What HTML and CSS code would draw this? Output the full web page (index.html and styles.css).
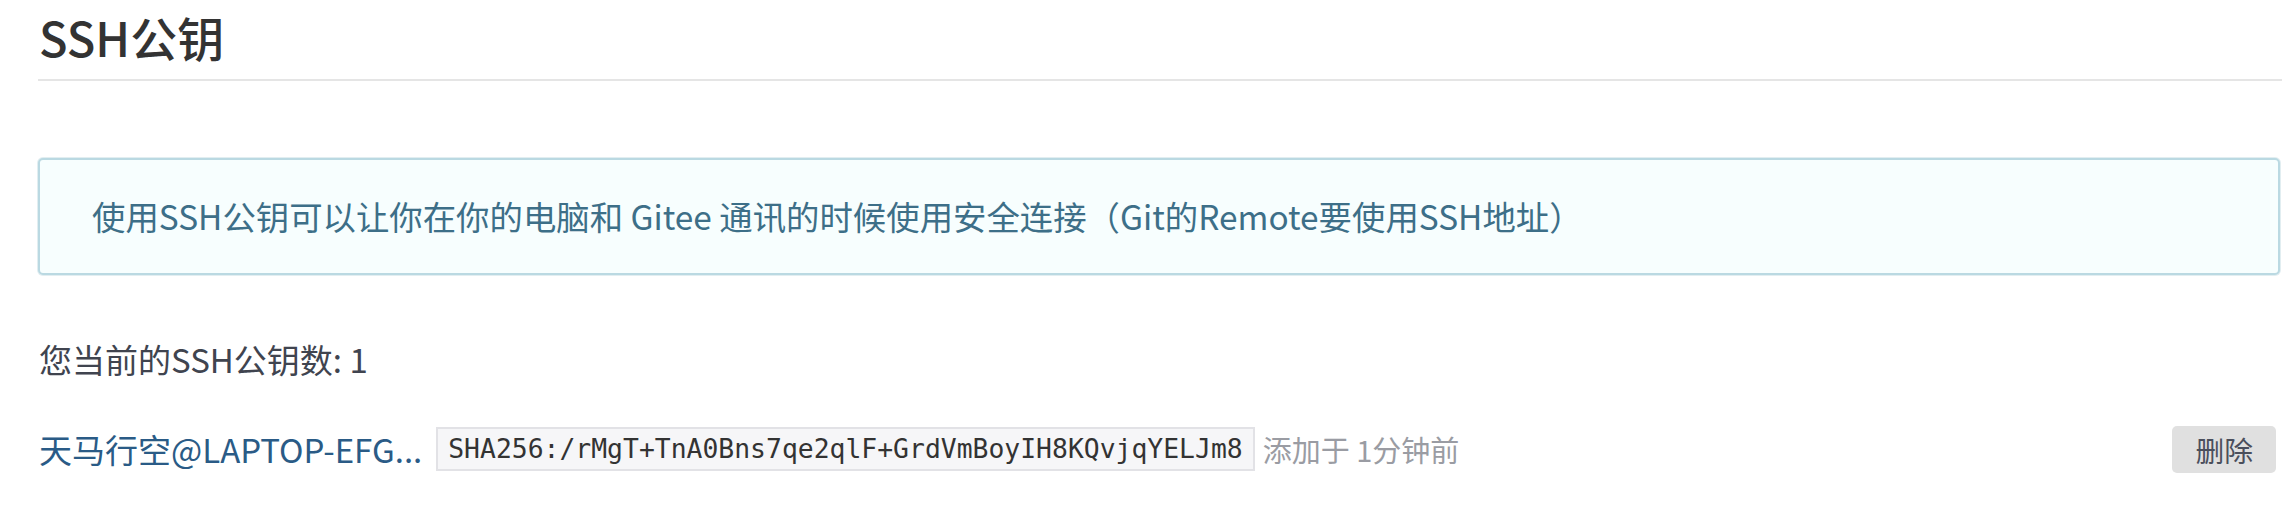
FILE: index.html
```html
<!DOCTYPE html>
<html lang="zh-CN">
<head>
<meta charset="utf-8">
<title>SSH公钥</title>
<link rel="stylesheet" href="styles.css">
</head>
<body>
<div class="page">
  <h3 class="title">SSH公钥</h3>
  <div class="alert">使用SSH公钥可以让你在你的电脑和 Gitee 通讯的时候使用安全连接（Git的Remote要使用SSH地址）</div>
  <div class="count">您当前的SSH公钥数: 1</div>
  <div class="key-row">
    <a class="key-name" href="#">天马行空@LAPTOP-EFG...</a>
    <code class="fingerprint">SHA256:/rMgT+TnA0Bns7qe2qlF+GrdVmBoyIH8KQvjqYELJm8</code>
    <span class="added">添加于 1分钟前</span>
    <button class="btn-delete" type="button">删除</button>
  </div>
</div>
</body>
</html>
```
FILE: styles.css
```css
html, body {
  margin: 0;
  padding: 0;
  background: #ffffff;
}

body {
  font-family: "Noto Sans CJK SC", "Noto Sans", sans-serif;
  color: #40444f;
}

.page {
  padding: 0 5px 0 38px;
}

.title {
  margin: 0;
  padding: 9px 0 14px 1px;
  font-size: 47px;
  line-height: 56px;
  font-weight: 500;
  color: #333333;
  border-bottom: 2px solid #e5e5e5;
}

.alert {
  margin-top: 77px;
  margin-right: 2px;
  padding: 32px 40px 33px 52px;
  background: #f7fefe;
  border: 2px solid #bad9e2;
  border-radius: 5px;
  box-shadow: 0 0 0 1px #e2eef1;
  font-size: 33.4px;
  line-height: 48px;
  color: #3d6f88;
}

.count {
  margin-top: 60px;
  padding-left: 1px;
  font-size: 33px;
  line-height: 48px;
  color: #40444f;
}

.key-row {
  margin-top: 42px;
  padding-left: 1px;
  display: flex;
  align-items: center;
  height: 48px;
}

.key-name {
  font-size: 33px;
  line-height: 48px;
  color: #2a5b86;
  text-decoration: none;
}

.fingerprint {
  margin-left: 14px;
  padding: 0 10px;
  height: 40px;
  line-height: 40px;
  font-family: "DejaVu Sans Mono", monospace;
  font-size: 26.4px;
  color: #333333;
  background: #f6f6f8;
  border: 2px solid #e2e2e6;
}

.added {
  margin-left: 8px;
  font-size: 29px;
  line-height: 48px;
  color: #9a9ca3;
}

.btn-delete {
  margin-left: auto;
  margin-right: 6px;
  height: 47px;
  padding: 0 23px;
  font-family: "Noto Sans CJK SC", sans-serif;
  font-size: 28.8px;
  line-height: 47px;
  color: #4b4f5c;
  background: #e0e0e0;
  border: none;
  border-radius: 5px;
}
```
